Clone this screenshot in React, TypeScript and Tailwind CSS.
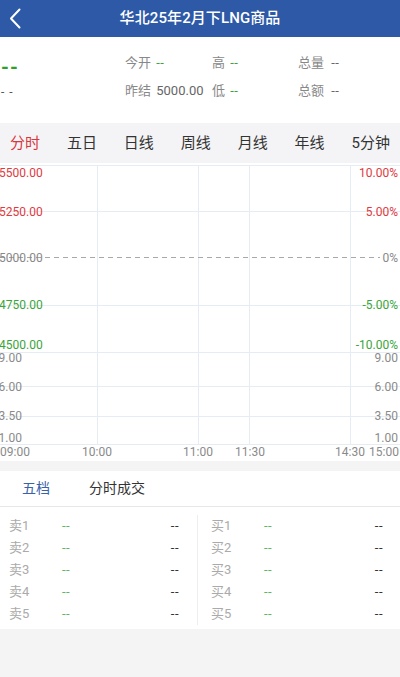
const RED = '#e0393e';
const GREEN = '#3aa53a';
const GRID = '#e6ecf4';

const tabs = ['分时', '五日', '日线', '周线', '月线', '年线', '5分钟'];

const hLines = [2, 48, 142, 189, 223, 253, 281];
const vLines = [97, 198, 249, 350];

function BackIcon() {
  return (
    <svg width="40" height="37" viewBox="0 0 40 37" className="block">
      <polyline points="19.5,9.5 11,18.5 19.5,27.5" fill="none" stroke="#fff" strokeWidth="2" strokeLinecap="round" strokeLinejoin="round" />
    </svg>
  );
}

function TimeChart() {
  return (
    <svg width="400" height="298" className="block" style={{ fontFamily: 'Roboto, sans-serif' }}>
      {/* grid */}
      {hLines.map((y) => (
        <line key={y} x1="0" x2="400" y1={y + 0.5} y2={y + 0.5} stroke={GRID} strokeWidth="1" />
      ))}
      {vLines.map((x) => (
        <line key={x} x1={x + 0.5} x2={x + 0.5} y1="2" y2="281" stroke={GRID} strokeWidth="1" />
      ))}
      <line x1="0" x2="380" y1="94.5" y2="94.5" stroke="#a8a8a8" strokeWidth="1" strokeDasharray="5 4" />

      {/* price axis */}
      <g fontSize="12">
        <text x="-1" y="14" fill={RED}>5500.00</text>
        <text x="-1" y="52.5" fill={RED}>5250.00</text>
        <text x="-1" y="98.5" fill="#888">5000.00</text>
        <text x="-1" y="145.5" fill={GREEN}>4750.00</text>
        <text x="-1" y="185.5" fill={GREEN}>4500.00</text>

        <text x="398" y="14" fill={RED} textAnchor="end">10.00%</text>
        <text x="398" y="52.5" fill={RED} textAnchor="end">5.00%</text>
        <text x="398" y="98.5" fill="#888" textAnchor="end">0%</text>
        <text x="398" y="145.5" fill={GREEN} textAnchor="end">-5.00%</text>
        <text x="398" y="185.5" fill={GREEN} textAnchor="end">-10.00%</text>
      </g>

      {/* volume axis */}
      <g fontSize="12" fill="#8a8a8a">
        <text x="-1.5" y="198.5">9.00</text>
        <text x="-1.5" y="228">6.00</text>
        <text x="-1.5" y="256.5">3.50</text>
        <text x="-1.5" y="279">1.00</text>
        <text x="398" y="198.5" textAnchor="end">9.00</text>
        <text x="398" y="228" textAnchor="end">6.00</text>
        <text x="398" y="256.5" textAnchor="end">3.50</text>
        <text x="398" y="279" textAnchor="end">1.00</text>
      </g>

      {/* time axis */}
      <g fontSize="12" fill="#8a8a8a">
        <text x="0" y="292.5">09:00</text>
        <text x="97" y="292.5" textAnchor="middle">10:00</text>
        <text x="198" y="292.5" textAnchor="middle">11:00</text>
        <text x="250" y="292.5" textAnchor="middle">11:30</text>
        <text x="350" y="292.5" textAnchor="middle">14:30</text>
        <text x="399" y="292.5" textAnchor="end">15:00</text>
      </g>
    </svg>
  );
}

function BookRow({ label, left }: { label: string; left: boolean }) {
  return (
    <div className={`flex items-center h-[22px] ${left ? 'pl-[9px] pr-[18px]' : 'pl-[13px] pr-[17px]'}`}>
      <span className="w-[53px] text-[#aaaaaa]">{label}</span>
      <span className="flex-1 text-[#5cb85c] tracking-[0.5px]">--</span>
      <span className="text-[#333] tracking-[0.5px]">--</span>
    </div>
  );
}

export default function App() {
  return (
    <div className="min-h-[677px] bg-[#f4f4f4] font-['Roboto','Noto_Sans_CJK_SC',sans-serif]">
      {/* Title bar */}
      <header className="grid grid-cols-[40px_1fr_40px] items-center h-[37px] bg-[#2d59a6] text-white">
        <BackIcon />
        <h1 className="text-center text-[15px] font-medium tracking-[0.1px]">华北25年2月下LNG商品</h1>
        <div />
      </header>

      {/* Quote summary */}
      <section className="flex h-[86px] bg-white">
        <div className="w-[125px] pt-[20px]">
          <div className="h-[20px] leading-[20px] text-[20px] font-bold text-[#2ea02e] tracking-[1px] pl-[1px]">--</div>
          <div className="mt-[6px] h-[18px] leading-[18px] text-[12px] text-[#555] pl-[1px] tracking-[1px]">- -</div>
        </div>
        <div className="flex-1 pt-[17px] text-[13px] text-[#888]">
          <div className="grid grid-cols-[87px_86px_1fr] h-[18px] leading-[18px]">
            <div>今开 <span className="ml-[2px] text-[#3aa53a] tracking-[0.5px]">--</span></div>
            <div>高 <span className="ml-[2px] text-[#3aa53a] tracking-[0.5px]">--</span></div>
            <div>总量 <span className="ml-[4px] text-[#666] tracking-[0.5px]">--</span></div>
          </div>
          <div className="grid grid-cols-[87px_86px_1fr] h-[18px] leading-[18px] mt-[10px]">
            <div>昨结 <span className="ml-[2px] text-[#666]">5000.00</span></div>
            <div>低 <span className="ml-[2px] text-[#3aa53a] tracking-[0.5px]">--</span></div>
            <div>总额 <span className="ml-[4px] text-[#666] tracking-[0.5px]">--</span></div>
          </div>
        </div>
      </section>

      {/* Period tabs */}
      <nav className="flex items-center justify-between h-[39px] mt-[1px] px-[10px] bg-[#f4f4f6] text-[15px] text-[#333]">
        {tabs.map((t, i) => (
          <span key={t} className={i === 0 ? 'text-[#d9363e]' : ''}>
            {t}
          </span>
        ))}
      </nav>

      {/* Chart */}
      <div className="bg-white">
        <TimeChart />
      </div>

      {/* Book tabs */}
      <div className="mt-[10px] bg-white">
        <div className="flex items-center h-[36px] pl-[22px] gap-[39px] text-[14px] border-b border-[#e8e8e8]">
          <span className="text-[#3a62a8]">五档</span>
          <span className="text-[#333]">分时成交</span>
        </div>
        <div className="flex pt-[8px] pb-[4px] text-[13px]">
          <div className="w-[198px] border-r border-[#eeeeee]">
            {[1, 2, 3, 4, 5].map((n) => (
              <BookRow key={n} label={`卖${n}`} left />
            ))}
          </div>
          <div className="flex-1">
            {[1, 2, 3, 4, 5].map((n) => (
              <BookRow key={n} label={`买${n}`} left={false} />
            ))}
          </div>
        </div>
      </div>
    </div>
  );
}
